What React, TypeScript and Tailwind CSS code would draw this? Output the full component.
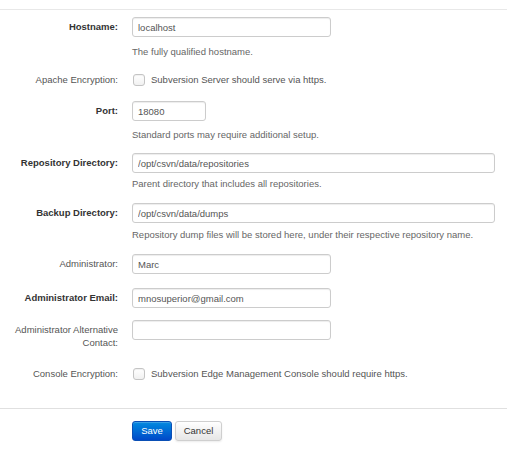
import React from "react";

// Server settings form — labels on the left, controls on the right
interface RowProps {
  label: React.ReactNode;
  bold?: boolean;
  className?: string;
  children: React.ReactNode;
}

function InputRow({ label, bold, className, children }: RowProps) {
  return (
    <div className={`grid grid-cols-[118px_1fr] gap-x-[14px] ${className ?? ""}`}>
      <div
        className={`text-right pt-[3px] leading-[13px] ${
          bold ? "font-bold text-[#333]" : "text-[#555]"
        }`}
      >
        {label}
      </div>
      <div>{children}</div>
    </div>
  );
}

function CheckRow({ label, text, className }: { label: string; text: string; className?: string }) {
  return (
    <div className={`grid grid-cols-[118px_1fr] gap-x-[14px] items-center h-[12px] ${className ?? ""}`}>
      <div className="text-right leading-[12px] text-[#555]">{label}</div>
      <div className="flex items-center gap-[6px] pl-[1px]">
        <span className="w-[12px] h-[12px] rounded-[3px] border border-[#c4c4c4] bg-gradient-to-b from-white to-[#f1f1f1] shadow-[inset_0_1px_1px_rgba(0,0,0,0.06)]" />
        <span className="leading-[12px] text-[#555]">{text}</span>
      </div>
    </div>
  );
}

function TextInput({ value, width }: { value?: string; width: string }) {
  return (
    <input
      readOnly
      defaultValue={value}
      className={`${width} block h-[20px] rounded-[3px] border border-[#ccc] bg-white px-[5px] text-[9.5px] text-[#555] outline-none shadow-[inset_0_1px_1px_rgba(0,0,0,0.075)] font-['Liberation_Sans',Arial,sans-serif]`}
    />
  );
}

function Help({ className, children }: { className?: string; children: React.ReactNode }) {
  return <p className={`leading-[12px] text-[#666] ${className ?? ""}`}>{children}</p>;
}

export default function App() {
  return (
    <div className="min-h-screen bg-white pt-[9px] text-[9.5px] font-['Liberation_Sans',Arial,sans-serif]">
      <div className="border-t border-[#e8e8e8]">
        <InputRow label="Hostname:" bold className="mt-[7px]">
          <TextInput value="localhost" width="w-[199px]" />
          <Help className="mt-[9px]">The fully qualified hostname.</Help>
        </InputRow>

        <CheckRow
          label="Apache Encryption:"
          text="Subversion Server should serve via https."
          className="mt-[16px]"
        />

        <InputRow label="Port:" bold className="mt-[15px]">
          <TextInput value="18080" width="w-[74px]" />
          <Help className="mt-[8px]">Standard ports may require additional setup.</Help>
        </InputRow>

        <InputRow label="Repository Directory:" bold className="mt-[12px]">
          <TextInput value="/opt/csvn/data/repositories" width="w-[363px]" />
          <Help className="mt-[5px]">Parent directory that includes all repositories.</Help>
        </InputRow>

        <InputRow label="Backup Directory:" bold className="mt-[13px]">
          <TextInput value="/opt/csvn/data/dumps" width="w-[363px]" />
          <Help className="mt-[6px]">
            Repository dump files will be stored here, under their respective repository name.
          </Help>
        </InputRow>

        <InputRow label="Administrator:" className="mt-[13px]">
          <TextInput value="Marc" width="w-[199px]" />
        </InputRow>

        <InputRow label="Administrator Email:" bold className="mt-[14px]">
          <TextInput value="mnosuperior@gmail.com" width="w-[199px]" />
        </InputRow>

        <InputRow label="Administrator Alternative Contact:" className="mt-[12px]">
          <TextInput width="w-[199px]" />
        </InputRow>

        <CheckRow
          label="Console Encryption:"
          text="Subversion Edge Management Console should require https."
          className="mt-[19px]"
        />
      </div>

      {/* Form actions */}
      <div className="mt-[28px] border-t border-[#e0e0e0] pt-[12px] pl-[132px] flex gap-[3px]">
        <button className="h-[20px] w-[40px] rounded-[3px] border border-[#0a4fb5] bg-gradient-to-b from-[#0a8ae0] to-[#0048c8] text-white text-[9.5px] shadow-[inset_0_1px_0_rgba(255,255,255,0.2)]">
          Save
        </button>
        <button className="h-[20px] w-[47px] rounded-[3px] border border-[#cfcfcf] bg-gradient-to-b from-white to-[#e6e6e6] text-[#333] text-[9.5px] shadow-[0_1px_2px_rgba(0,0,0,0.08)]">
          Cancel
        </button>
      </div>
    </div>
  );
}
